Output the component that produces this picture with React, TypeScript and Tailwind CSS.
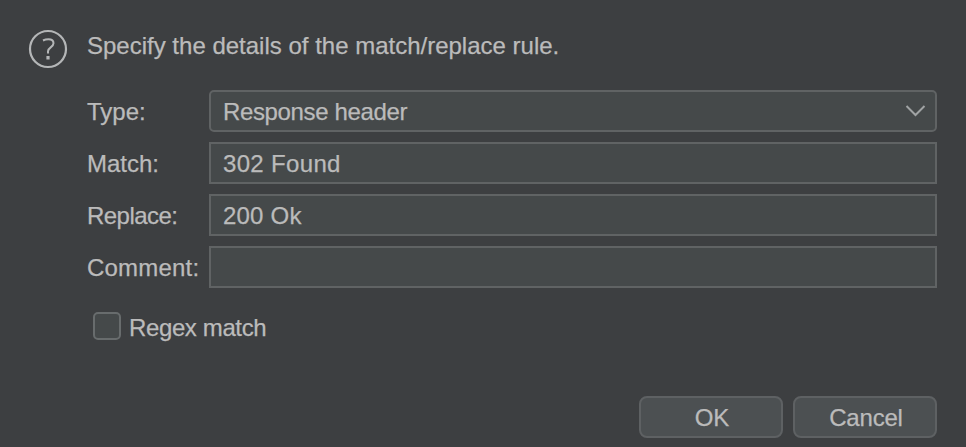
import type { ReactNode } from 'react';

function Row({ label, spacing, children }: { label: string; spacing: string; children: ReactNode }) {
  return (
    <div className="flex h-[42px] items-center">
      <label className={`w-[122px] shrink-0 pt-[2px] whitespace-nowrap ${spacing}`}>{label}</label>
      {children}
    </div>
  );
}

const field = 'flex h-[42px] grow items-center border-2 border-[#606364] bg-[#45494a] pl-3';
const button = 'flex h-[42px] w-36 items-center justify-center rounded-lg border-2 border-[#5e6163] bg-[#4c5052] pt-[2px] pl-[2px]';

export default function App() {
  return (
    <main className="flex h-[447px] w-[966px] flex-col overflow-hidden bg-[#3d3f41] font-['Liberation_Sans',Arial,sans-serif] text-[24px] leading-[28px] text-[#bbbbbb] [-webkit-text-stroke:0.25px_#bbbbbb]">
      <header className="flex h-[90px] pt-[29px] pl-7">
        <svg width="40" height="40" viewBox="0 0 40 40" fill="none" stroke="#b4b6b7" strokeWidth="2.2" className="shrink-0">
          <circle cx="20" cy="20" r="18" />
          <path d="M15 11.500q2.500-1.200 5.500-1.200c3.500 0 5 1.500 5 4 0 4-5.500 4.200-5.500 8v2.200" strokeWidth="2" />
          <path d="M20 27v3.500" strokeWidth="3.200" />
        </svg>
        <h1 className="mt-[3px] ml-[19px] whitespace-nowrap">
          <span>Specify the details of the match/replace rule.</span>
        </h1>
      </header>
      <section className="flex flex-col gap-[10px] pr-[29px] pl-[87px]">
        <Row label="Type:" spacing="tracking-normal">
          <div className={`${field} justify-between rounded-[5px] pr-[8px]`}>
            <span className="pt-[2px] tracking-[-0.36px]">Response header</span>
            <svg width="22" height="14" viewBox="0 0 22 14" fill="none" stroke="#a0a3a4" strokeWidth="2">
              <path d="M1.500 2l9 9 9-9" />
            </svg>
          </div>
        </Row>
        <Row label="Match:" spacing="tracking-normal">
          <div className={field}><span className="pt-[2px] tracking-[0.33px]">302 Found</span></div>
        </Row>
        <Row label="Replace:" spacing="tracking-[-0.55px]">
          <div className={field}><span className="pt-[2px] tracking-[0.2px]">200 Ok</span></div>
        </Row>
        <Row label="Comment:" spacing="tracking-[0.2px]">
          <div className={field} />
        </Row>
      </section>
      <label className="mt-6 ml-[93px] flex h-7 items-center">
        <span className="h-7 w-7 rounded-[5px] border-2 border-[#686c6d] bg-[#45494a]" />
        <span className="mt-1 ml-2 tracking-[-0.38px]">Regex match</span>
      </label>
      <footer className="mt-14 flex justify-end gap-[10px] pr-[29px]">
        <button className={button}><span>OK</span></button>
        <button className={button}><span className="tracking-[-0.2px]">Cancel</span></button>
      </footer>
    </main>
  );
}
